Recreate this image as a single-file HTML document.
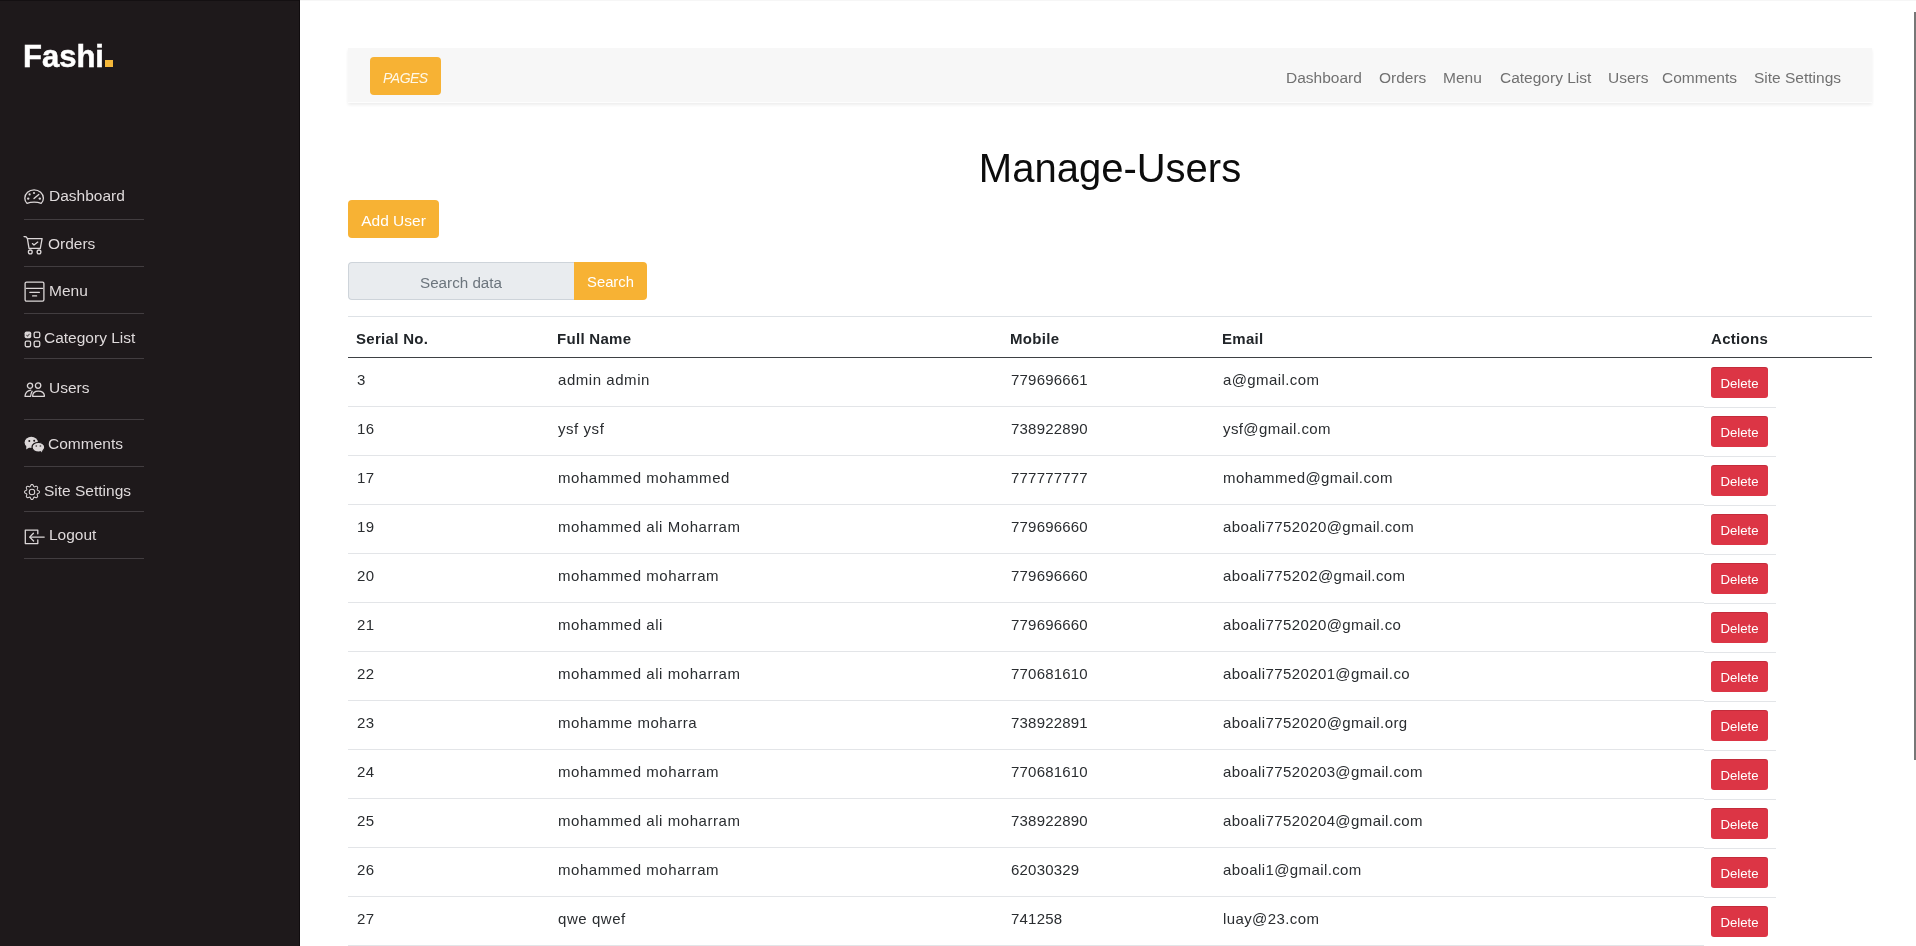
<!DOCTYPE html><html><head><meta charset="utf-8"><title>Manage Users</title><style>
*{margin:0;padding:0;box-sizing:border-box}
html,body{width:1916px;height:946px;overflow:hidden;background:#fff}
body{font-family:"Liberation Sans",sans-serif;position:relative;color:#212529}
.a{position:absolute;white-space:nowrap;line-height:1}
#side{position:absolute;left:0;top:0;width:300px;height:946px;background:#1e191b}
#side .t{position:absolute;font-size:15.5px;line-height:1;color:#dfdadb;white-space:nowrap}
#side .ic{position:absolute;line-height:0}
#side .sep{position:absolute;left:24px;width:120px;height:1px;background:#423d40}
.logo{position:absolute;left:23px;font-size:31px;font-weight:bold;color:#fff;line-height:1;letter-spacing:0;-webkit-text-stroke:.5px #fff}
.dot{position:absolute;left:105px;top:60px;width:8px;height:7px;background:#f4b73a}
#nav{position:absolute;left:348px;top:48px;width:1524px;height:55px;background:#f7f7f7;border-bottom:1px solid #fdfdfd;box-shadow:0 2px 3px rgba(0,0,0,.07)}
.btn-y{position:absolute;background:#f7b234;border-radius:4px}
.nl{position:absolute;font-size:15.5px;color:#717171;line-height:1;white-space:nowrap}
.th{position:absolute;font-size:15px;letter-spacing:.3px;font-weight:bold;color:#212529;line-height:1;white-space:nowrap}
.td{position:absolute;font-size:15px;letter-spacing:.55px;color:#2a2d30;line-height:1;white-space:nowrap}
.rb{position:absolute;height:1px;background:#e3e5e8}
.del{position:absolute;left:1711px;width:57px;height:31px;background:#dc3545;border-radius:3px;box-shadow:inset 0 1px 0 rgba(120,20,30,.25)}
.delt{position:absolute;font-size:13.2px;color:#fff;line-height:1;white-space:nowrap}
.a,#side .t,.nl,.th,.td,.delt,.logo{will-change:transform}
</style></head><body>
<div id="side">
<div style="position:absolute;left:0;top:0;width:300px;height:1px;background:#141012"></div><div style="position:absolute;left:299px;top:0;width:1px;height:946px;background:#100c0e"></div>
<div class="logo" style="top:40.76px">Fashi</div><div class="dot"></div>
<div class="ic" style="left:24px;top:189px"><svg width="21" height="16" viewBox="0 0 21 16"><path fill="none" stroke="#dcd7d8" stroke-width="1.3" stroke-linecap="round" stroke-linejoin="round" d="M3 14.4 C1.5 12.9 .8 11.1 .8 9.2 .8 4.4 5.1 .8 10.1 .8 15.1 .8 19.4 4.4 19.4 9.2 19.4 11.1 18.7 12.9 17.2 14.4 C15.1 13.6 12.7 13.2 10.1 13.2 7.5 13.2 5.1 13.6 3 14.4Z"/><path fill="none" stroke="#dcd7d8" stroke-width="1.3" stroke-linecap="round" stroke-linejoin="round" stroke-width="1.9" d="M10 9.6 L14.8 5.4"/><circle cx="10" cy="4" r="1.1" fill="#dcd7d8"/><circle cx="5.6" cy="5.4" r="1.1" fill="#dcd7d8"/><circle cx="4.2" cy="9.6" r="1.2" fill="#dcd7d8"/><circle cx="15.8" cy="9.6" r="1.2" fill="#dcd7d8"/></svg></div>
<div class="t" style="left:49px;top:187.58px">Dashboard</div>
<div class="sep" style="top:219px"></div>
<div class="ic" style="left:23px;top:236px"><svg width="21" height="20" viewBox="0 0 21 20"><path fill="none" stroke="#dcd7d8" stroke-width="1.3" stroke-linecap="round" stroke-linejoin="round" d="M1.1 .5 L3.2 .8 L4.4 2.6 L6 12.4 H17.3 L19.1 2.6 H4.4"/><path fill="none" stroke="#dcd7d8" stroke-width="1.3" stroke-linecap="round" stroke-linejoin="round" stroke-width="1.6" d="M9.4 7.6 L11 9 L14.8 6.1"/><circle fill="none" stroke="#dcd7d8" stroke-width="1.3" stroke-linecap="round" stroke-linejoin="round" cx="7.3" cy="15.9" r="1.9"/><circle fill="none" stroke="#dcd7d8" stroke-width="1.3" stroke-linecap="round" stroke-linejoin="round" cx="16" cy="15.9" r="1.9"/></svg></div>
<div class="t" style="left:48px;top:235.88px">Orders</div>
<div class="sep" style="top:266px"></div>
<div class="ic" style="left:23.5px;top:281px"><svg width="21" height="21" viewBox="0 0 21 21"><rect fill="none" stroke="#dcd7d8" stroke-width="1.3" stroke-linecap="round" stroke-linejoin="round" x="1.1" y="1.1" width="18.8" height="19" rx="1.4"/><path fill="none" stroke="#dcd7d8" stroke-width="1.3" stroke-linecap="round" stroke-linejoin="round" d="M2.4 7.4 H18.6"/><path fill="none" stroke="#dcd7d8" stroke-width="1.3" stroke-linecap="round" stroke-linejoin="round" stroke-width="1.5" d="M5.8 11.3 H15.4 M8.6 14.9 H12.6"/></svg></div>
<div class="t" style="left:48.5px;top:282.88px">Menu</div>
<div class="sep" style="top:313px"></div>
<div class="ic" style="left:23.5px;top:330.5px"><svg width="17" height="17" viewBox="0 0 17 17"><rect x=".6" y=".5" width="6.6" height="6.8" rx="1.8" fill="#dcd7d8"/><path d="M2.4 4 L3.6 5.1 L5.5 2.8" fill="none" stroke="#6a6566" stroke-width="1.1"/><rect fill="none" stroke="#dcd7d8" stroke-width="1.3" stroke-linecap="round" stroke-linejoin="round" x="10.15" y="1.15" width="5.6" height="5.5" rx="1.4"/><rect fill="none" stroke="#dcd7d8" stroke-width="1.3" stroke-linecap="round" stroke-linejoin="round" x="1.25" y="10.15" width="5.3" height="5.6" rx="1.4"/><rect fill="none" stroke="#dcd7d8" stroke-width="1.3" stroke-linecap="round" stroke-linejoin="round" x="10.15" y="10.15" width="5.6" height="5.6" rx="1.4"/></svg></div>
<div class="t" style="left:44px;top:329.88px">Category List</div>
<div class="sep" style="top:358px"></div>
<div class="ic" style="left:23.5px;top:381.5px"><svg width="21" height="16" viewBox="0 0 21 16"><circle fill="none" stroke="#dcd7d8" stroke-width="1.3" stroke-linecap="round" stroke-linejoin="round" cx="6" cy="3.8" r="2.6"/><circle fill="none" stroke="#dcd7d8" stroke-width="1.3" stroke-linecap="round" stroke-linejoin="round" cx="14.1" cy="3.6" r="2.7"/><path fill="none" stroke="#dcd7d8" stroke-width="1.3" stroke-linecap="round" stroke-linejoin="round" d="M8.6 14.3 C8.6 11 10.8 9.1 14.3 9.1 C17.8 9.1 20.4 11 20.4 14.3 Z"/><path fill="none" stroke="#dcd7d8" stroke-width="1.3" stroke-linecap="round" stroke-linejoin="round" d="M6.8 8.2 C3.6 8.8 1.2 11 1 14.3 H6.6 C6.8 12.2 7.3 10.6 8.1 9.4"/></svg></div>
<div class="t" style="left:48.5px;top:379.88px">Users</div>
<div class="sep" style="top:419px"></div>
<div class="ic" style="left:23.5px;top:436px"><svg width="22" height="17" viewBox="0 0 22 17"><ellipse cx="7.3" cy="6.4" rx="6.7" ry="5.6" fill="#dcd7d8"/><path d="M2.4 9.6 L2.2 13.4 L6 11" fill="#dcd7d8"/><circle cx="5.3" cy="5" r="1" fill="#1e191b"/><circle cx="10.2" cy="4.8" r="1" fill="#1e191b"/><ellipse cx="14.4" cy="11.2" rx="6.4" ry="4.9" fill="#dcd7d8" stroke="#1e191b" stroke-width="1.3"/><path d="M16.6 14.6 L17.8 16.4 L18.6 13.6Z" fill="#dcd7d8"/><circle cx="12.3" cy="10" r=".9" fill="#6a6566"/><circle cx="16.4" cy="10" r=".9" fill="#6a6566"/></svg></div>
<div class="t" style="left:48px;top:435.88px">Comments</div>
<div class="sep" style="top:466px"></div>
<div class="ic" style="left:24px;top:484px"><svg width="16" height="16" viewBox="0 0 16 16"><path fill="#dcd7d8" d="M8 4.754a3.246 3.246 0 1 0 0 6.492 3.246 3.246 0 0 0 0-6.492zM5.754 8a2.246 2.246 0 1 1 4.492 0 2.246 2.246 0 0 1-4.492 0z"/><path fill="#dcd7d8" d="M9.796 1.343c-.527-1.79-3.065-1.79-3.592 0l-.094.319a.873.873 0 0 1-1.255.52l-.292-.16c-1.64-.892-3.433.902-2.54 2.541l.159.292a.873.873 0 0 1-.52 1.255l-.319.094c-1.79.527-1.79 3.065 0 3.592l.319.094a.873.873 0 0 1 .52 1.255l-.16.292c-.892 1.64.901 3.434 2.541 2.54l.292-.159a.873.873 0 0 1 1.255.52l.094.319c.527 1.79 3.065 1.79 3.592 0l.094-.319a.873.873 0 0 1 1.255-.52l.292.16c1.64.893 3.434-.902 2.54-2.541l-.159-.292a.873.873 0 0 1 .52-1.255l.319-.094c1.79-.527 1.79-3.065 0-3.592l-.319-.094a.873.873 0 0 1-.52-1.255l.16-.292c.893-1.64-.902-3.433-2.541-2.54l-.292.159a.873.873 0 0 1-1.255-.52l-.094-.319zm-2.633.283c.246-.835 1.428-.835 1.674 0l.094.319a1.873 1.873 0 0 0 2.693 1.115l.291-.16c.764-.415 1.6.42 1.184 1.185l-.159.292a1.873 1.873 0 0 0 1.116 2.692l.318.094c.835.246.835 1.428 0 1.674l-.319.094a1.873 1.873 0 0 0-1.115 2.693l.16.291c.415.764-.42 1.6-1.185 1.184l-.291-.159a1.873 1.873 0 0 0-2.693 1.116l-.094.318c-.246.835-1.428.835-1.674 0l-.094-.319a1.873 1.873 0 0 0-2.692-1.115l-.292.16c-.764.415-1.6-.42-1.184-1.185l.159-.291A1.873 1.873 0 0 0 1.945 8.93l-.319-.094c-.835-.246-.835-1.428 0-1.674l.319-.094A1.873 1.873 0 0 0 3.06 4.377l-.16-.292c-.415-.764.42-1.6 1.185-1.184l.292.159a1.873 1.873 0 0 0 2.692-1.115l.094-.319z"/></svg></div>
<div class="t" style="left:44.2px;top:482.88px">Site Settings</div>
<div class="sep" style="top:511px"></div>
<div class="ic" style="left:23.5px;top:528.5px"><svg width="21" height="17" viewBox="0 0 21 17"><path fill="none" stroke="#dcd7d8" stroke-width="1.3" stroke-linecap="round" stroke-linejoin="round" d="M13.8 4.8 V1.1 H1.3 V14.6 H13.8 V10.8"/><path fill="none" stroke="#dcd7d8" stroke-width="1.3" stroke-linecap="round" stroke-linejoin="round" d="M20.2 8.1 H6.2"/><path fill="none" stroke="#dcd7d8" stroke-width="1.3" stroke-linecap="round" stroke-linejoin="round" stroke-width="1.6" d="M9.4 4.2 L5.7 8.1 L9.6 12"/></svg></div>
<div class="t" style="left:48.5px;top:527.48px">Logout</div>
<div class="sep" style="top:558px"></div>
</div>
<div style="position:absolute;left:300px;top:0;width:1616px;height:1px;background:#f6f6f6"></div>
<div id="nav"></div>
<div class="btn-y" style="left:370px;top:57px;width:71px;height:38px"></div>
<div class="a" style="left:383px;top:70.95px;font-size:14px;letter-spacing:-.5px;font-style:italic;color:#fff8e8">PAGES</div>
<div class="nl" style="left:1286px;top:69.88px">Dashboard</div>
<div class="nl" style="left:1378.5px;top:69.88px">Orders</div>
<div class="nl" style="left:1443px;top:69.88px">Menu</div>
<div class="nl" style="left:1499.5px;top:69.88px">Category List</div>
<div class="nl" style="left:1607.5px;top:69.88px">Users</div>
<div class="nl" style="left:1661.5px;top:69.88px">Comments</div>
<div class="nl" style="left:1753.5px;top:69.88px">Site Settings</div>
<div class="a" style="left:348px;width:1524px;text-align:center;top:147.74px;font-size:40px;color:#0c0c0c">Manage-Users</div>
<div class="btn-y" style="left:348px;top:200px;width:91px;height:38px"></div>
<div class="a" style="left:348px;width:91px;text-align:center;top:213.28px;font-size:15.5px;color:#fff">Add User</div>
<div style="position:absolute;left:348px;top:262px;width:227px;height:38px;background:#e9ecef;border:1px solid #ced4da;border-right:none;border-radius:4px 0 0 4px"></div>
<div class="a" style="left:348px;width:226px;text-align:center;top:275.13px;font-size:15.2px;color:#6c757d">Search data</div>
<div class="btn-y" style="left:574px;top:262px;width:73px;height:38px;border-radius:0 4px 4px 0"></div>
<div class="a" style="left:574px;width:73px;text-align:center;top:275.47px;font-size:14.8px;color:#fff">Search</div>
<div class="rb" style="left:348px;top:316px;width:1524px;background:#dee2e6"></div>
<div class="th" style="left:356px;top:331.00px">Serial No.</div>
<div class="th" style="left:557px;top:331.00px">Full Name</div>
<div class="th" style="left:1010px;top:331.00px">Mobile</div>
<div class="th" style="left:1222px;top:331.00px">Email</div>
<div class="th" style="left:1711px;top:331.00px">Actions</div>
<div style="position:absolute;left:348px;top:357px;width:1524px;height:1px;background:#3e4144"></div>
<div class="td" style="left:356.5px;top:372.10px;letter-spacing:0.3px">3</div>
<div class="td" style="left:557.5px;top:372.10px;letter-spacing:0.55px">admin admin</div>
<div class="td" style="left:1010.5px;top:372.10px;letter-spacing:0.2px">779696661</div>
<div class="td" style="left:1222.5px;top:372.10px;letter-spacing:0.4px">a@gmail.com</div>
<div class="del" style="top:367px"></div>
<div class="delt" style="left:1711px;width:57px;text-align:center;top:376.53px">Delete</div>
<div class="rb" style="left:348px;top:406px;width:1356px"></div>
<div class="rb" style="left:1704px;top:406.5px;width:72px"></div>
<div class="td" style="left:356.5px;top:421.10px;letter-spacing:0.3px">16</div>
<div class="td" style="left:557.5px;top:421.10px;letter-spacing:0.55px">ysf ysf</div>
<div class="td" style="left:1010.5px;top:421.10px;letter-spacing:0.2px">738922890</div>
<div class="td" style="left:1222.5px;top:421.10px;letter-spacing:0.4px">ysf@gmail.com</div>
<div class="del" style="top:416px"></div>
<div class="delt" style="left:1711px;width:57px;text-align:center;top:425.53px">Delete</div>
<div class="rb" style="left:348px;top:455px;width:1356px"></div>
<div class="rb" style="left:1704px;top:455.5px;width:72px"></div>
<div class="td" style="left:356.5px;top:470.10px;letter-spacing:0.3px">17</div>
<div class="td" style="left:557.5px;top:470.10px;letter-spacing:0.55px">mohammed mohammed</div>
<div class="td" style="left:1010.5px;top:470.10px;letter-spacing:0.2px">777777777</div>
<div class="td" style="left:1222.5px;top:470.10px;letter-spacing:0.4px">mohammed@gmail.com</div>
<div class="del" style="top:465px"></div>
<div class="delt" style="left:1711px;width:57px;text-align:center;top:474.53px">Delete</div>
<div class="rb" style="left:348px;top:504px;width:1356px"></div>
<div class="rb" style="left:1704px;top:504.5px;width:72px"></div>
<div class="td" style="left:356.5px;top:519.10px;letter-spacing:0.3px">19</div>
<div class="td" style="left:557.5px;top:519.10px;letter-spacing:0.55px">mohammed ali Moharram</div>
<div class="td" style="left:1010.5px;top:519.10px;letter-spacing:0.2px">779696660</div>
<div class="td" style="left:1222.5px;top:519.10px;letter-spacing:0.4px">aboali7752020@gmail.com</div>
<div class="del" style="top:514px"></div>
<div class="delt" style="left:1711px;width:57px;text-align:center;top:523.53px">Delete</div>
<div class="rb" style="left:348px;top:553px;width:1356px"></div>
<div class="rb" style="left:1704px;top:553.5px;width:72px"></div>
<div class="td" style="left:356.5px;top:568.10px;letter-spacing:0.3px">20</div>
<div class="td" style="left:557.5px;top:568.10px;letter-spacing:0.55px">mohammed moharram</div>
<div class="td" style="left:1010.5px;top:568.10px;letter-spacing:0.2px">779696660</div>
<div class="td" style="left:1222.5px;top:568.10px;letter-spacing:0.4px">aboali775202@gmail.com</div>
<div class="del" style="top:563px"></div>
<div class="delt" style="left:1711px;width:57px;text-align:center;top:572.53px">Delete</div>
<div class="rb" style="left:348px;top:602px;width:1356px"></div>
<div class="rb" style="left:1704px;top:602.5px;width:72px"></div>
<div class="td" style="left:356.5px;top:617.10px;letter-spacing:0.3px">21</div>
<div class="td" style="left:557.5px;top:617.10px;letter-spacing:0.55px">mohammed ali</div>
<div class="td" style="left:1010.5px;top:617.10px;letter-spacing:0.2px">779696660</div>
<div class="td" style="left:1222.5px;top:617.10px;letter-spacing:0.4px">aboali7752020@gmail.co</div>
<div class="del" style="top:612px"></div>
<div class="delt" style="left:1711px;width:57px;text-align:center;top:621.53px">Delete</div>
<div class="rb" style="left:348px;top:651px;width:1356px"></div>
<div class="rb" style="left:1704px;top:651.5px;width:72px"></div>
<div class="td" style="left:356.5px;top:666.10px;letter-spacing:0.3px">22</div>
<div class="td" style="left:557.5px;top:666.10px;letter-spacing:0.55px">mohammed ali moharram</div>
<div class="td" style="left:1010.5px;top:666.10px;letter-spacing:0.2px">770681610</div>
<div class="td" style="left:1222.5px;top:666.10px;letter-spacing:0.4px">aboali77520201@gmail.co</div>
<div class="del" style="top:661px"></div>
<div class="delt" style="left:1711px;width:57px;text-align:center;top:670.53px">Delete</div>
<div class="rb" style="left:348px;top:700px;width:1356px"></div>
<div class="rb" style="left:1704px;top:700.5px;width:72px"></div>
<div class="td" style="left:356.5px;top:715.10px;letter-spacing:0.3px">23</div>
<div class="td" style="left:557.5px;top:715.10px;letter-spacing:0.55px">mohamme moharra</div>
<div class="td" style="left:1010.5px;top:715.10px;letter-spacing:0.2px">738922891</div>
<div class="td" style="left:1222.5px;top:715.10px;letter-spacing:0.4px">aboali7752020@gmail.org</div>
<div class="del" style="top:710px"></div>
<div class="delt" style="left:1711px;width:57px;text-align:center;top:719.53px">Delete</div>
<div class="rb" style="left:348px;top:749px;width:1356px"></div>
<div class="rb" style="left:1704px;top:749.5px;width:72px"></div>
<div class="td" style="left:356.5px;top:764.10px;letter-spacing:0.3px">24</div>
<div class="td" style="left:557.5px;top:764.10px;letter-spacing:0.55px">mohammed moharram</div>
<div class="td" style="left:1010.5px;top:764.10px;letter-spacing:0.2px">770681610</div>
<div class="td" style="left:1222.5px;top:764.10px;letter-spacing:0.4px">aboali77520203@gmail.com</div>
<div class="del" style="top:759px"></div>
<div class="delt" style="left:1711px;width:57px;text-align:center;top:768.53px">Delete</div>
<div class="rb" style="left:348px;top:798px;width:1356px"></div>
<div class="rb" style="left:1704px;top:798.5px;width:72px"></div>
<div class="td" style="left:356.5px;top:813.10px;letter-spacing:0.3px">25</div>
<div class="td" style="left:557.5px;top:813.10px;letter-spacing:0.55px">mohammed ali moharram</div>
<div class="td" style="left:1010.5px;top:813.10px;letter-spacing:0.2px">738922890</div>
<div class="td" style="left:1222.5px;top:813.10px;letter-spacing:0.4px">aboali77520204@gmail.com</div>
<div class="del" style="top:808px"></div>
<div class="delt" style="left:1711px;width:57px;text-align:center;top:817.53px">Delete</div>
<div class="rb" style="left:348px;top:847px;width:1356px"></div>
<div class="rb" style="left:1704px;top:847.5px;width:72px"></div>
<div class="td" style="left:356.5px;top:862.10px;letter-spacing:0.3px">26</div>
<div class="td" style="left:557.5px;top:862.10px;letter-spacing:0.55px">mohammed moharram</div>
<div class="td" style="left:1010.5px;top:862.10px;letter-spacing:0.2px">62030329</div>
<div class="td" style="left:1222.5px;top:862.10px;letter-spacing:0.4px">aboali1@gmail.com</div>
<div class="del" style="top:857px"></div>
<div class="delt" style="left:1711px;width:57px;text-align:center;top:866.53px">Delete</div>
<div class="rb" style="left:348px;top:896px;width:1356px"></div>
<div class="rb" style="left:1704px;top:896.5px;width:72px"></div>
<div class="td" style="left:356.5px;top:911.10px;letter-spacing:0.3px">27</div>
<div class="td" style="left:557.5px;top:911.10px;letter-spacing:0.55px">qwe qwef</div>
<div class="td" style="left:1010.5px;top:911.10px;letter-spacing:0.2px">741258</div>
<div class="td" style="left:1222.5px;top:911.10px;letter-spacing:0.4px">luay@23.com</div>
<div class="del" style="top:906px"></div>
<div class="delt" style="left:1711px;width:57px;text-align:center;top:915.53px">Delete</div>
<div class="rb" style="left:348px;top:945px;width:1356px"></div>
<div class="rb" style="left:1704px;top:945.5px;width:72px"></div>
<div style="position:absolute;left:1914px;top:12px;width:2px;height:748px;background:#777"></div>
</body></html>
